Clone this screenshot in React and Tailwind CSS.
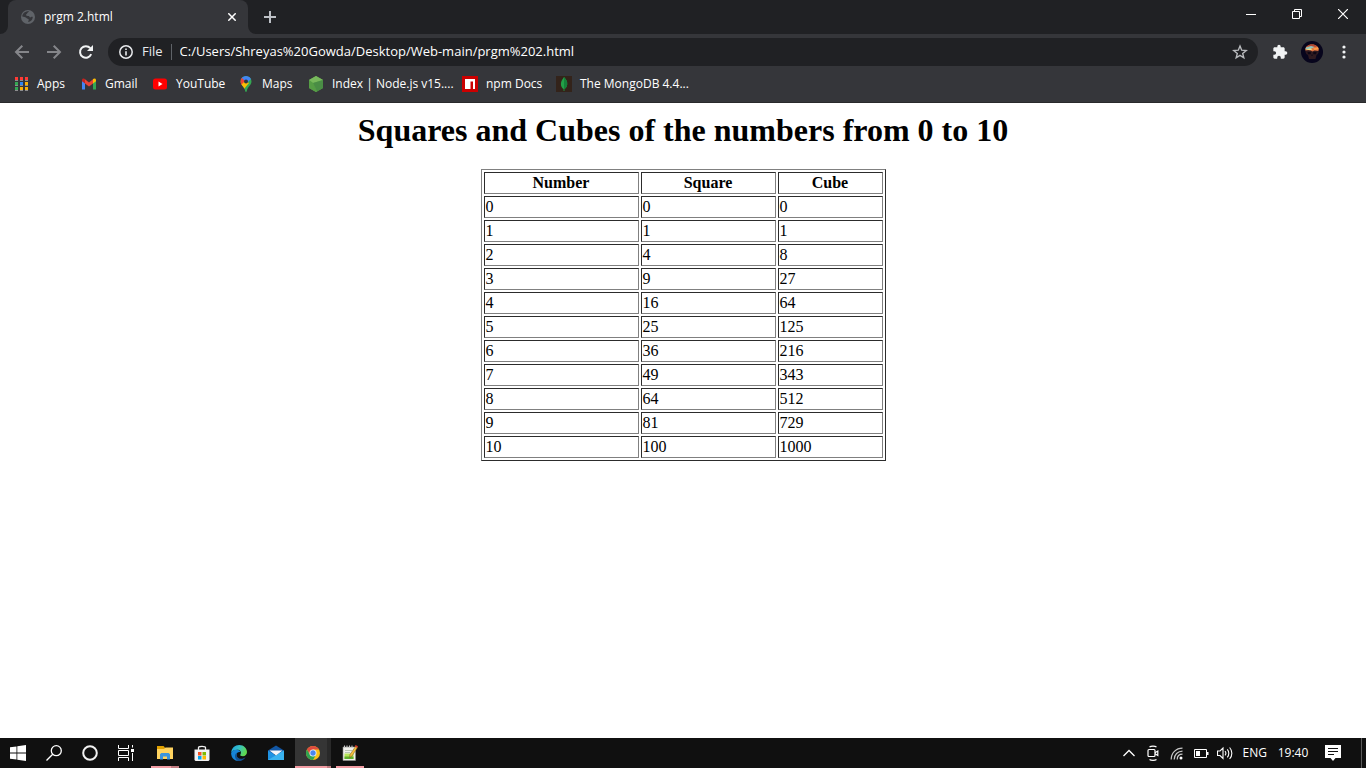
import React from "react";

const rows = Array.from({ length: 11 }, (_, n) => [n, n * n, n * n * n]);

function GlobeIcon() {
  return (
    <svg width="16" height="16" viewBox="0 0 16 16" aria-hidden="true">
      <circle cx="8" cy="8" r="7" fill="#5f6368" />
      <path
        d="M9.2 2.2c-.3 1-1.800 1-2 2-.1.8-1.200.9-1.200 1.800 0 .9 1.500.9 2.600 1 1 .2.800 1.400 1.600 1.400s1-.8 2.600-.5c-.2 2.800-2 4.900-4.700 5.100.2-1 .8-1.600.6-2.400C8.500 9.700 7 9.900 6.500 9 6 8.200 3.500 8 2.300 7.600 2.300 4.500 5 1.900 9.200 2.200z"
        fill="#35363a"
      />
    </svg>
  );
}

function BackIcon() {
  return (
    <svg width="16" height="16" viewBox="0 0 16 16" fill="none" stroke="#85868a" strokeWidth="2" aria-hidden="true">
      <path d="M15 8H2.500M8.300 1.700L2 8l6.300 6.300" />
    </svg>
  );
}

function ForwardIcon() {
  return (
    <svg width="16" height="16" viewBox="0 0 16 16" fill="none" stroke="#85868a" strokeWidth="2" aria-hidden="true">
      <path d="M1 8h12.500M7.700 1.700L14 8l-6.300 6.300" />
    </svg>
  );
}

function ReloadIcon() {
  return (
    <svg width="16" height="16" viewBox="0 0 16 16" aria-hidden="true">
      <path d="M13.200 10.200A5.800 5.800 0 1 1 12.300 4.200" fill="none" stroke="#f1f3f4" strokeWidth="2" />
      <path d="M15 1v6H9z" fill="#f1f3f4" />
    </svg>
  );
}

function InfoIcon() {
  return (
    <svg width="16" height="16" viewBox="0 0 16 16" aria-hidden="true">
      <circle cx="8" cy="8" r="6.200" fill="none" stroke="#e8eaed" strokeWidth="1.500" />
      <path d="M7.200 7.200h1.600v4.300H7.200zM7.200 4.400h1.600V6H7.200z" fill="#e8eaed" />
    </svg>
  );
}

function StarIcon() {
  return (
    <svg width="16" height="16" viewBox="0 0 16 16" fill="none" stroke="#b8babd" strokeWidth="1.400" aria-hidden="true">
      <path d="M8 2l1.700 4.200 4.500.3-3.500 2.900 1.100 4.400L8 11.400l-3.800 2.400 1.100-4.400L1.800 6.500l4.500-.3z" />
    </svg>
  );
}

function PuzzleIcon() {
  return (
    <svg width="16" height="16" viewBox="0 0 24 24" aria-hidden="true">
      <path
        fill="#f1f3f4"
        d="M20.500 11H19V7c0-1.100-.9-2-2-2h-4V3.500a2.500 2.500 0 0 0-5 0V5H4c-1.100 0-2 .9-2 2v3.800h1.500a2.700 2.700 0 0 1 0 5.400H2V20c0 1.100.9 2 2 2h3.800v-1.500a2.700 2.700 0 0 1 5.400 0V22H17c1.100 0 2-.9 2-2v-4h1.500a2.500 2.500 0 0 0 0-5z"
      />
    </svg>
  );
}

function AvatarIcon() {
  return (
    <svg width="22" height="22" viewBox="0 0 22 22" aria-hidden="true">
      <circle cx="11" cy="11" r="11" fill="#07051c" />
      <path d="M4.500 8.500c1-7 12-7 13 0 .8 3-.5 4.500-2 5.500l-1 4H8l-1-4C5 13 4 11.500 4.500 8.500z" fill="#2e1a20" />
      <path d="M4.300 8C5.300 2 16.700 2 17.700 8l-.3 2-3.900-.6-2 1-3-1.400-4.100.5z" fill="#dd7442" />
      <path d="M7 4.500c2-1.500 6-1.500 8 0l1 1.200H6z" fill="#b14531" />
      <path d="M5 6.500l5-1.500 3.500 1-4 1.900-5 .4z" fill="#8fc4bf" />
      <path d="M4.500 8.300l5-.8 2 1-3 .8z" fill="#f6dc80" />
      <path d="M12 7.500l5-1.300.6 2-4.100.8z" fill="#ff9a45" />
      <path d="M6.500 11h3.300v2.300H7zM12.300 11h3.300l-.5 2.300h-2.800zM10.500 13.500h1V15h-1z" fill="#0d0715" />
    </svg>
  );
}

function MenuDotsIcon() {
  return (
    <svg width="16" height="16" viewBox="0 0 16 16" fill="#f1f3f4" aria-hidden="true">
      <circle cx="8" cy="3" r="1.600" />
      <circle cx="8" cy="8" r="1.600" />
      <circle cx="8" cy="13" r="1.600" />
    </svg>
  );
}

function AppsIcon() {
  const cells = [
    [2, 1, "#ff3b35"], [7, 1, "#ff3b35"], [12, 1, "#ff3b35"],
    [2, 6, "#34a853"], [7, 6, "#2d86f5"], [12, 6, "#fbb005"],
    [2, 11, "#34a853"], [7, 11, "#fbb005"], [12, 11, "#fbb005"],
  ];
  return (
    <svg width="16" height="16" viewBox="0 0 16 16" aria-hidden="true">
      {cells.map(([x, y, fill]) => (
        <rect key={`${x}-${y}`} x={x} y={y} width="3" height="3" fill={fill} />
      ))}
      <path d="M2 4h3v1H2zM7 4h3v1H7zM12 4h3v1h-3zM2 9h3v1H2zM7 9h3v1H7zM12 9h3v1h-3zM2 14h3v1H2zM7 14h3v1H7zM12 14h3v1h-3z" fill="#8d8d8f" />
    </svg>
  );
}

function GmailIcon() {
  return (
    <svg width="16" height="16" viewBox="0 0 16 16" aria-hidden="true">
      <path d="M1 4v9.500h3V7z" fill="#4285f4" />
      <path d="M15 4v9.500h-3V7z" fill="#34a853" />
      <path d="M4 3.300v4.200L8 10.500l4-3V3.300L8 6.500z" fill="#ea4335" />
      <path d="M1 4c0-1.700 1.700-2 3-1v4.500L1 5.300z" fill="#c5221f" />
      <path d="M15 4c0-1.700-1.700-2-3-1v4.500l3-2.200z" fill="#fbbc04" />
    </svg>
  );
}

function YouTubeIcon() {
  return (
    <svg width="16" height="16" viewBox="0 0 16 16" aria-hidden="true">
      <rect x="1" y="2.500" width="14" height="11" rx="2.500" fill="#f00" />
      <path d="M6.500 5.500v5L10.500 8z" fill="#fff" />
    </svg>
  );
}

function MapsIcon() {
  return (
    <svg width="16" height="16" viewBox="0 0 16 16" aria-hidden="true">
      <clipPath id="pin">
        <path d="M8 0a5.500 5.500 0 0 1 5.500 5.500c0 3.800-4 5-4.700 9.500-.2 1.300-1.400 1.300-1.600 0C6.500 10.500 2.500 9.300 2.500 5.500A5.500 5.500 0 0 1 8 0z" />
      </clipPath>
      <g clipPath="url(#pin)">
        <path d="M0 0h16v16H0z" fill="#34a853" />
        <path d="M5 0h11L8 8 3 2z" fill="#4285f4" />
        <path d="M0 2h4l4 4-5 4z" fill="#ea4335" />
        <path d="M3 9l4-4 4 2-5 6z" fill="#fbbc04" />
      </g>
      <circle cx="8" cy="5.500" r="2" fill="#2f3440" />
    </svg>
  );
}

function NodeIcon() {
  return (
    <svg width="16" height="16" viewBox="0 0 16 16" aria-hidden="true">
      <path d="M8 0l7 4v8l-7 4-7-4V4z" fill="#5fa84a" />
      <path d="M1 4l7-4 7 4-10 3z" fill="#78b85c" />
      <path d="M1 4l4 3 4 8.400-1 .6-7-4z" fill="#569d45" />
      <path d="M15 4v8l-6 3.400L5 7z" fill="#4a8d45" />
    </svg>
  );
}

function NpmIcon() {
  return (
    <svg width="16" height="16" viewBox="0 0 16 16" aria-hidden="true">
      <path d="M0 0h16v16H0z" fill="#cb0000" />
      <path d="M3 3h10v10h-2V5.500H8.500V13H3z" fill="#fff" />
    </svg>
  );
}

function MongoIcon() {
  return (
    <svg width="16" height="16" viewBox="0 0 16 16" aria-hidden="true">
      <path d="M0 0h16v16H0z" fill="#33231a" />
      <path d="M8 1c2.500 3 3.500 4.700 3.200 7.500C11 11 9.500 12.500 8.400 13v2h-.8v-2C6 12 4.900 10.500 4.900 8 4.900 5 6.500 3.500 8 1z" fill="#23a047" />
      <path d="M8 1c2.500 3 3.500 4.700 3.200 7.500C11 11 9.500 12.500 8 13.200z" fill="#15803a" />
    </svg>
  );
}

const bookmarks = [
  ["Apps", AppsIcon],
  ["Gmail", GmailIcon],
  ["YouTube", YouTubeIcon],
  ["Maps", MapsIcon],
  ["Index | Node.js v15....", NodeIcon],
  ["npm Docs", NpmIcon],
  ["The MongoDB 4.4...", MongoIcon],
];

function TabStrip() {
  return (
    <div className="flex h-[34px] bg-[#202124] pl-2">
      <div className="relative flex w-60 items-center rounded-t-lg bg-[#35363a] pl-3 pr-2">
        <svg className="absolute -left-2 bottom-0" width="8" height="8" viewBox="0 0 8 8" aria-hidden="true">
          <path d="M8 0v8H0a8 8 0 0 0 8-8z" fill="#35363a" />
        </svg>
        <svg className="absolute -right-2 bottom-0" width="8" height="8" viewBox="0 0 8 8" aria-hidden="true">
          <path d="M0 0v8h8a8 8 0 0 1-8-8z" fill="#35363a" />
        </svg>
        <GlobeIcon />
        <span className="ml-2 flex-1 text-xs text-white">prgm 2.html</span>
        <button aria-label="Close tab" className="flex size-4 items-center justify-center">
          <svg width="8" height="8" viewBox="0 0 8 8" stroke="#fff" strokeWidth="1.500" aria-hidden="true">
            <path d="M.3.3l7.400 7.400M7.700.3L.3 7.700" />
          </svg>
        </button>
      </div>
      <button aria-label="New tab" className="ml-3 flex w-5 items-center justify-center">
        <svg width="12" height="12" viewBox="0 0 12 12" stroke="#bdc1c6" strokeWidth="2" aria-hidden="true">
          <path d="M6 0v12M0 6h12" />
        </svg>
      </button>
      <div className="ml-auto flex h-7">
        <button aria-label="Minimize" className="flex w-[46px] items-center justify-center">
          <svg width="10" height="10" viewBox="0 0 10 10" aria-hidden="true">
            <path d="M0 5h10v1H0z" fill="#fff" />
          </svg>
        </button>
        <button aria-label="Restore" className="flex w-[46px] items-center justify-center">
          <svg width="10" height="10" viewBox="0 0 10 10" fill="none" stroke="#fff" aria-hidden="true">
            <path d="M.5 2.500h7v7h-7zM2.500 2.500v-2h7v7h-2" />
          </svg>
        </button>
        <button aria-label="Close window" className="flex w-[46px] items-center justify-center">
          <svg width="10" height="10" viewBox="0 0 10 10" stroke="#fff" strokeWidth="1.200" aria-hidden="true">
            <path d="M0 0l10 10M10 0L0 10" />
          </svg>
        </button>
      </div>
    </div>
  );
}

function Toolbar() {
  return (
    <div className="flex h-9 items-center bg-[#35363a] px-1.5">
      <button aria-label="Back" className="flex w-8 justify-center"><BackIcon /></button>
      <button aria-label="Forward" className="flex w-8 justify-center"><ForwardIcon /></button>
      <button aria-label="Reload" className="flex w-8 justify-center"><ReloadIcon /></button>
      <div className="ml-1.5 flex h-7 flex-1 items-center rounded-full bg-[#202124] px-2.5">
        <button className="flex items-center gap-2 text-[13px] text-[#e8eaed]">
          <InfoIcon />
          File
        </button>
        <span className="ml-2 h-4 w-px bg-[#5f6368]" />
        <input
          aria-label="Address"
          className="ml-2 min-w-0 flex-1 bg-transparent text-[13px] text-white outline-none"
          defaultValue="C:/Users/Shreyas%20Gowda/Desktop/Web-main/prgm%202.html"
        />
        <button aria-label="Bookmark this page"><StarIcon /></button>
      </div>
      <button aria-label="Extensions" className="ml-1.5 flex w-8 justify-center"><PuzzleIcon /></button>
      <button aria-label="Profile" className="flex w-8 justify-center"><AvatarIcon /></button>
      <button aria-label="Menu" className="flex w-8 justify-center"><MenuDotsIcon /></button>
    </div>
  );
}

function BookmarksBar() {
  return (
    <nav
      aria-label="Bookmarks"
      className="grid grid-cols-[68px_71px_86px_70px_154px_94px_auto] justify-start border-b border-[#29292b] bg-[#35363a] pb-1 pl-[13px]"
    >
      {bookmarks.map(([label, Icon]) => (
        <a key={label} href="#" className="flex h-7 items-center gap-2 whitespace-nowrap text-xs text-white">
          <Icon />
          {label}
        </a>
      ))}
    </nav>
  );
}

function NumbersTable() {
  const cell = "border border-b-[#808080] border-l-[#2c2c2c] border-r-[#808080] border-t-[#2c2c2c] p-px";
  return (
    <table className="mx-auto w-[30%] border-separate border-spacing-0.5 border border-b-[#2c2c2c] border-l-[#808080] border-r-[#2c2c2c] border-t-[#808080] text-base leading-[18px]">
      <thead>
        <tr>
          <th className={`w-[155px] ${cell}`}>Number</th>
          <th className={`w-[135px] ${cell}`}>Square</th>
          <th className={cell}>Cube</th>
        </tr>
      </thead>
      <tbody>
        {rows.map((row) => (
          <tr key={row[0]}>
            {row.map((value, i) => (
              <td key={i} className={cell}>{value}</td>
            ))}
          </tr>
        ))}
      </tbody>
    </table>
  );
}

function WindowsIcon() {
  return (
    <svg width="16" height="16" viewBox="0 0 16 16" fill="#fff" aria-hidden="true">
      <path d="M0 2.300l6.500-.9v6.200H0zM7.300 1.300L16 0v7.600H7.300zM0 8.400h6.500v6.200L0 13.700zM7.300 8.400H16V16l-8.700-1.300z" />
    </svg>
  );
}

function SearchIcon() {
  return (
    <svg width="16" height="16" viewBox="0 0 16 16" fill="none" stroke="#fff" strokeWidth="1.300" aria-hidden="true">
      <circle cx="10.300" cy="5.700" r="5" />
      <path d="M6.700 9.300L.5 15.500" />
    </svg>
  );
}

function CortanaIcon() {
  return (
    <svg width="16" height="16" viewBox="0 0 16 16" fill="none" stroke="#f2f2f2" strokeWidth="2" aria-hidden="true">
      <circle cx="8" cy="8" r="6.800" />
    </svg>
  );
}

function TaskViewIcon() {
  return (
    <svg width="16" height="16" viewBox="0 0 16 16" aria-hidden="true">
      <path d="M.5 0v3.500h10V0M.5 16v-3.500h10V16M.5 5.500h10v5H.5zM14.500 0v2.500M14.500 8v8" fill="none" stroke="#fff" />
      <path d="M13 4h3v3h-3z" fill="#fff" />
    </svg>
  );
}

function ExplorerIcon() {
  return (
    <svg width="16" height="16" viewBox="0 0 16 16" aria-hidden="true">
      <path d="M0 1h6.500L8 2.500V6H0z" fill="#e0a000" />
      <path d="M0 4h7l1.500-1.500H16V14H0z" fill="#ffd35f" />
      <path d="M3 14.500V9.300L4.300 8h7.400L13 9.300v5.200h-3V11.500H6v3z" fill="#3b94dd" />
    </svg>
  );
}

function StoreIcon() {
  return (
    <svg width="16" height="16" viewBox="0 0 16 16" aria-hidden="true">
      <path d="M4.500 5V2.500c0-1.500 7-1.500 7 0V5" fill="none" stroke="#f2f2f2" strokeWidth="1.300" />
      <path d="M.5 4.500h15V15l-1 1h-13l-1-1z" fill="#f2f2f2" />
      <path d="M4 7h3.500v3.500H4z" fill="#f25022" />
      <path d="M8.500 7H12v3.500H8.500z" fill="#7fba00" />
      <path d="M4 11h3.500v3.500H4z" fill="#00a4ef" />
      <path d="M8.500 11H12v3.500H8.500z" fill="#ffb900" />
    </svg>
  );
}

function EdgeIcon() {
  return (
    <svg width="16" height="16" viewBox="0 0 16 16" aria-hidden="true">
      <defs>
        <linearGradient id="edgeTop" x1="0" x2="1" y1="0" y2=".4">
          <stop offset="0" stopColor="#1b9de2" />
          <stop offset=".5" stopColor="#35c1c8" />
          <stop offset="1" stopColor="#5fd94f" />
        </linearGradient>
      </defs>
      <path d="M.2 7.500C.5 3 4 0 8.200 0 13 0 16 3.500 16 7c0 2.600-1.800 4.200-4 4.200-2.300 0-3.200-.8-2.600-1.700C11 7 9 4.800 6.500 4.800 3.500 4.800 1 6 .2 7.500z" fill="url(#edgeTop)" />
      <path d="M.1 8.200C.5 6 3 4.500 6 4.700c2 .2 3.200 1.300 3.600 2.600C7 6.500 5 8.500 5.600 11c.6 2.500 3 4 6 3.200C8 17.500.5 16 .1 8.200z" fill="#1684d8" />
      <path d="M6.300 7.500c-2 2.500-.2 6.300 3.700 6.300 1.800 0 3.300-.6 4.600-1.500C13 15 10 16.300 7.300 15.900 3.500 14.500 2.800 9 6.300 7.500z" fill="#124f91" />
    </svg>
  );
}

function MailIcon() {
  return (
    <svg width="16" height="16" viewBox="0 0 16 16" aria-hidden="true">
      <path d="M0 5.500L8 .5l8 5V9H0z" fill="#1257a5" />
      <path d="M0 5.500L8 10.500l8-5V15H0z" fill="#1f93e3" />
      <path d="M16 5.500V15L0 15z" fill="#39b3f0" />
      <path d="M1.500 5.500h13L8 10.500z" fill="#f4f7fb" />
    </svg>
  );
}

function ChromeIcon() {
  return (
    <svg width="16" height="16" viewBox="0 0 16 16" aria-hidden="true">
      <circle cx="8" cy="8" r="7" fill="#fbc116" />
      <path d="M1.940 4.500A7 7 0 0 1 14.060 4.500H8L5 9.800z" fill="#df4b3f" />
      <path d="M1.940 4.500A7 7 0 0 0 8 15l3-5.200H5z" fill="#2da352" />
      <circle cx="8" cy="8" r="3.500" fill="#f2f5fa" />
      <circle cx="8" cy="8" r="2.700" fill="#4a86ee" />
    </svg>
  );
}

function NotepadIcon() {
  return (
    <svg width="16" height="16" viewBox="0 0 16 16" aria-hidden="true">
      <path d="M1 2h12.500v13.500H1z" fill="#f0f0ec" stroke="#8f8f8a" strokeWidth=".6" />
      <path d="M2 .5h1v2.500H2zM4.500.5h1v2.500h-1zM7 .5h1v2.500H7zM9.500.5h1v2.500h-1z" fill="#c9c9c9" />
      <path d="M3 5h7v1H3zM3 7h5v1H3z" fill="#b9c4b3" />
      <path d="M2.500 8.500h9V14h-9z" fill="#b7e65a" />
      <path d="M2.500 11.500h9V14h-9z" fill="#5fae2c" />
      <path d="M13.500 1.500l2 1L10 11l-2.300 1.500.3-3z" fill="#f6bf3d" stroke="#6d5016" strokeWidth=".5" />
      <path d="M13.500 0l2.500 1.300-.8 1.500-2.400-1.200z" fill="#d3382b" />
    </svg>
  );
}

const systemButtons = [
  ["Start", WindowsIcon],
  ["Search", SearchIcon],
  ["Cortana", CortanaIcon],
  ["Task View", TaskViewIcon],
];

const appButtons = [
  { label: "File Explorer", Icon: ExplorerIcon, state: "stacked" },
  { label: "Microsoft Store", Icon: StoreIcon },
  { label: "Microsoft Edge", Icon: EdgeIcon },
  { label: "Mail", Icon: MailIcon },
  { label: "Google Chrome", Icon: ChromeIcon, state: "active" },
  { label: "Notepad++", Icon: NotepadIcon, state: "open" },
];

function AppButton({ label, Icon, state }) {
  const active = state === "active";
  return (
    <button
      aria-label={label}
      className={`relative flex w-9 items-center justify-center ${active ? "border-r-4 border-[#292929] bg-[#353535] pl-1" : ""}`}
    >
      <Icon />
      {state === "open" && <span className="absolute inset-x-1 bottom-0 h-0.5 bg-[#f29ca3]" />}
      {state === "stacked" && (
        <span className="absolute inset-x-1 bottom-0 h-0.5 border-r-8 border-[#c27d82] bg-[#f29ca3]" />
      )}
      {active && <span className="absolute -right-1 bottom-0 left-0 h-0.5 border-r-4 border-[#c27d82] bg-[#f29ca3]" />}
    </button>
  );
}

function Tray() {
  return (
    <div className="flex items-center text-xs text-white">
      <button aria-label="Show hidden icons" className="flex w-6 justify-center">
        <svg width="12" height="16" viewBox="0 0 12 16" fill="none" stroke="#fff" strokeWidth="1.300" aria-hidden="true">
          <path d="M.5 11L6 5.500l5.500 5.500" />
        </svg>
      </button>
      <button aria-label="Meet now" className="flex w-6 justify-center">
        <svg width="12" height="16" viewBox="0 0 12 16" fill="none" stroke="#fff" strokeWidth="1.200" aria-hidden="true">
          <rect x="1" y="4.500" width="7" height="7" rx="1" />
          <path d="M8 7.700l2.800-1.700v4.500L8 8.800M2.500 2C4 .8 8 .8 9.500 2M2.500 14.500c1.500 1.200 5.500 1.200 7 0" />
        </svg>
      </button>
      <button aria-label="Network" className="flex w-6 justify-center">
        <svg width="14" height="16" viewBox="0 0 14 16" fill="none" stroke="#c9c9c9" strokeWidth="1.200" aria-hidden="true">
          <path d="M1.200 14.500C1.200 8 6 3.200 12.500 3.200M4.200 14.500c0-4.800 3.600-8.300 8.300-8.300M7.200 14.500c0-3.200 2.200-5.300 5.300-5.300" />
          <circle cx="11" cy="13" r="1.500" fill="#fff" stroke="none" />
        </svg>
      </button>
      <button aria-label="Battery" className="flex w-6 justify-center">
        <svg width="16" height="16" viewBox="0 0 16 16" aria-hidden="true">
          <path d="M1.500 4.500h12v8h-12z" fill="none" stroke="#fff" />
          <path d="M14 7h1.500v3H14zM3 6h4v5H3z" fill="#fff" />
        </svg>
      </button>
      <button aria-label="Volume" className="flex w-6 justify-center">
        <svg width="16" height="16" viewBox="0 0 16 16" fill="none" stroke="#fff" strokeWidth="1.100" aria-hidden="true">
          <path d="M.5 6h2.500l3-3v10.500l-3-3H.5zM8 6.200c1 1.200 1 3 0 4.200M10.300 4.300c2 2.200 2 5.800 0 8M12.600 2.500c3 3.300 3 8.200 0 11.500" />
        </svg>
      </button>
      <button className="ml-1.5">ENG</button>
      <time className="ml-1.5 w-10 whitespace-nowrap text-center">19:40</time>
      <button aria-label="Notifications" className="ml-3 flex">
        <svg width="16" height="16" viewBox="0 0 16 16" aria-hidden="true">
          <path d="M0 0h16v13h-5.500L8 16l-2.500-3H0z" fill="#fff" />
          <path d="M3 3.500h10M3 6.500h10M3 9.500h6" stroke="#111" />
        </svg>
      </button>
      <span className="ml-5 mr-1 h-full w-px bg-[#5a5a5a]" />
    </div>
  );
}

function Taskbar() {
  return (
    <footer className="flex h-[30px] justify-between bg-[#101010]">
      <div className="flex gap-[3px]">
        <div className="flex">
          {systemButtons.map(([label, Icon]) => (
            <button key={label} aria-label={label} className="flex w-9 items-center justify-center">
              <Icon />
            </button>
          ))}
        </div>
        <div className="flex gap-px">
          {appButtons.map((app) => (
            <AppButton key={app.label} {...app} />
          ))}
        </div>
      </div>
      <Tray />
    </footer>
  );
}

export default function App() {
  return (
    <div className="flex min-h-screen flex-col bg-white font-['Open_Sans','Noto_Sans',sans-serif]">
      <header>
        <TabStrip />
        <Toolbar />
        <BookmarksBar />
      </header>
      <main className="flex-1 p-2 font-['Liberation_Serif','Times_New_Roman',serif] text-black">
        <h1 className="mb-[19px] text-center text-[32px] font-bold leading-[39px]">
          Squares and Cubes of the numbers from 0 to 10
        </h1>
        <NumbersTable />
      </main>
      <Taskbar />
    </div>
  );
}
